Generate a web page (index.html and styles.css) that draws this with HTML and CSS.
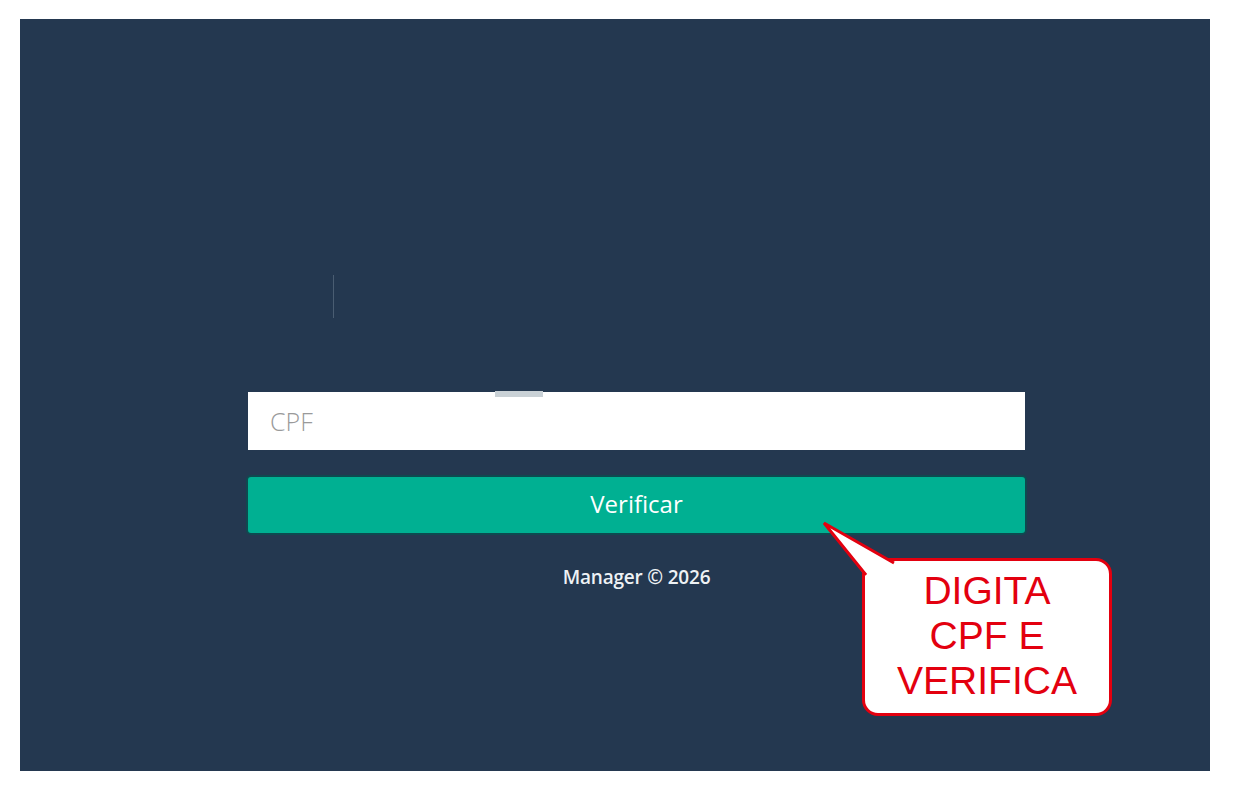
FILE: index.html
```html
<!DOCTYPE html>
<html lang="pt-BR">
<head>
    <meta charset="UTF-8">
    <meta name="viewport" content="width=device-width, initial-scale=1.0">
    <title>Manager - Verificar CPF</title>
    <link rel="stylesheet" href="styles.css">
</head>
<body>
    <div class="panel">
        <div class="cursor-line"></div>

        <div class="login">
            <form class="login-form" onsubmit="return false;">
                <div class="field">
                    <span class="field-tab"></span>
                    <input type="text" name="cpf" id="cpf" placeholder="CPF">
                </div>
                <button type="submit">Verificar</button>
            </form>
            <p class="footer">Manager &copy; 2026</p>
        </div>

        <div class="callout">
            <p>DIGITA<br>CPF E<br>VERIFICA</p>
        </div>
        <svg class="callout-tail" width="80" height="60" viewBox="0 0 80 60">
            <polygon points="46,58 3,3 76,45" fill="#ffffff"/>
            <polyline points="45,55 3,3 73,43" fill="none" stroke="#e3000f" stroke-width="3" stroke-linejoin="miter"/>
        </svg>
    </div>
</body>
</html>
```

FILE: styles.css
```css
body {
    margin: 0;
    padding: 0;
    background: #ffffff;
    font-family: 'Open Sans', sans-serif;
}

.panel {
    position: relative;
    margin: 19px 28px 0 20px;
    height: 752px;
    background: #243850;
    box-sizing: border-box;
    padding-top: 373px;
}

.cursor-line {
    position: absolute;
    left: 313px;
    top: 256px;
    width: 1px;
    height: 43px;
    background: #4a5d72;
}

.login {
    width: 777px;
    margin-left: 228px;
}

.login-form {
    display: flex;
    flex-direction: column;
    gap: 26px;
}

.field {
    position: relative;
}

.field-tab {
    position: absolute;
    left: 247px;
    top: -1px;
    width: 48px;
    height: 6px;
    background: #c9d1d6;
}

.field input {
    display: block;
    width: 100%;
    height: 58px;
    box-sizing: border-box;
    padding: 0 22px;
    border: none;
    background: #ffffff;
    font-family: 'Open Sans', sans-serif;
    font-size: 25px;
    font-weight: 300;
    color: #555555;
    outline: none;
}

.field input::placeholder {
    color: #9a9a9a;
}

.login-form button {
    height: 60px;
    margin: -1px -2px 0;
    padding-bottom: 4px;
    border: 2px solid #0e4a50;
    border-radius: 5px;
    background: #00b092;
    color: #ffffff;
    font-family: 'Open Sans', sans-serif;
    font-size: 24px;
    cursor: pointer;
}

.footer {
    margin: 29px 0 0;
    text-align: center;
    color: #eef2f5;
    font-size: 19px;
    font-weight: 600;
    letter-spacing: -0.2px;
}

.callout {
    position: absolute;
    left: 842px;
    top: 539px;
    width: 250px;
    height: 158px;
    box-sizing: border-box;
    border: 3px solid #e3000f;
    border-radius: 16px;
    background: #ffffff;
    display: flex;
    align-items: center;
    justify-content: center;
}

.callout p {
    margin: -3px 0 0;
    text-align: center;
    font-family: 'Liberation Sans', Arial, sans-serif;
    font-size: 39px;
    line-height: 45px;
    color: #e3000f;
}

.callout-tail {
    position: absolute;
    left: 801px;
    top: 501px;
}
```
